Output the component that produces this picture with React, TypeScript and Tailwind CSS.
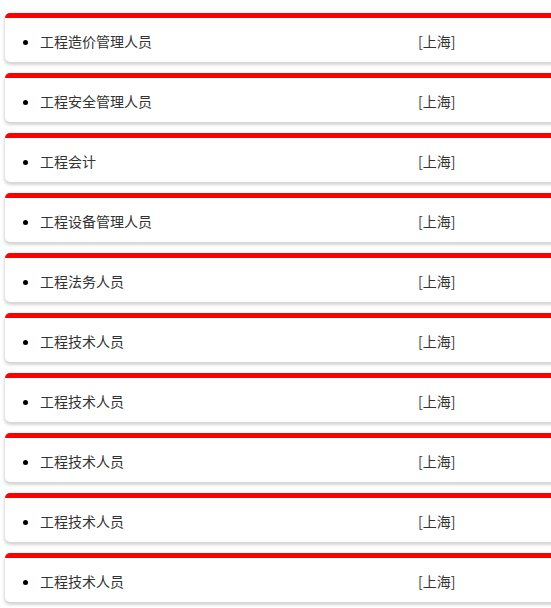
import React from "react";

const items = [
  "工程造价管理人员",
  "工程安全管理人员",
  "工程会计",
  "工程设备管理人员",
  "工程法务人员",
  "工程技术人员",
  "工程技术人员",
  "工程技术人员",
  "工程技术人员",
  "工程技术人员",
];

export default function App() {
  return (
    <div
      className="w-[551px] h-[608px] overflow-hidden bg-white pt-[13px]"
      style={{ fontFamily: '"Noto Sans CJK SC", "Noto Sans", sans-serif' }}
    >
      <div className="flex flex-col gap-[11px] pl-[5px]">
        {items.map((name, i) => (
          <div
            key={i}
            className="w-[560px] h-[49px] border-t-[5px] border-[#ff0000] rounded-[5px] bg-white shadow-[0_2px_3px_1px_rgba(0,0,0,0.16)]"
          >
            <ul className="list-disc pl-[35px] pt-[9px] text-[14px] leading-[28px] text-[#333]">
              <li className="marker:text-black">
                <div className="flex">
                  <span className="w-[378px]">{name}</span>
                  <span>[上海]</span>
                </div>
              </li>
            </ul>
          </div>
        ))}
      </div>
    </div>
  );
}
